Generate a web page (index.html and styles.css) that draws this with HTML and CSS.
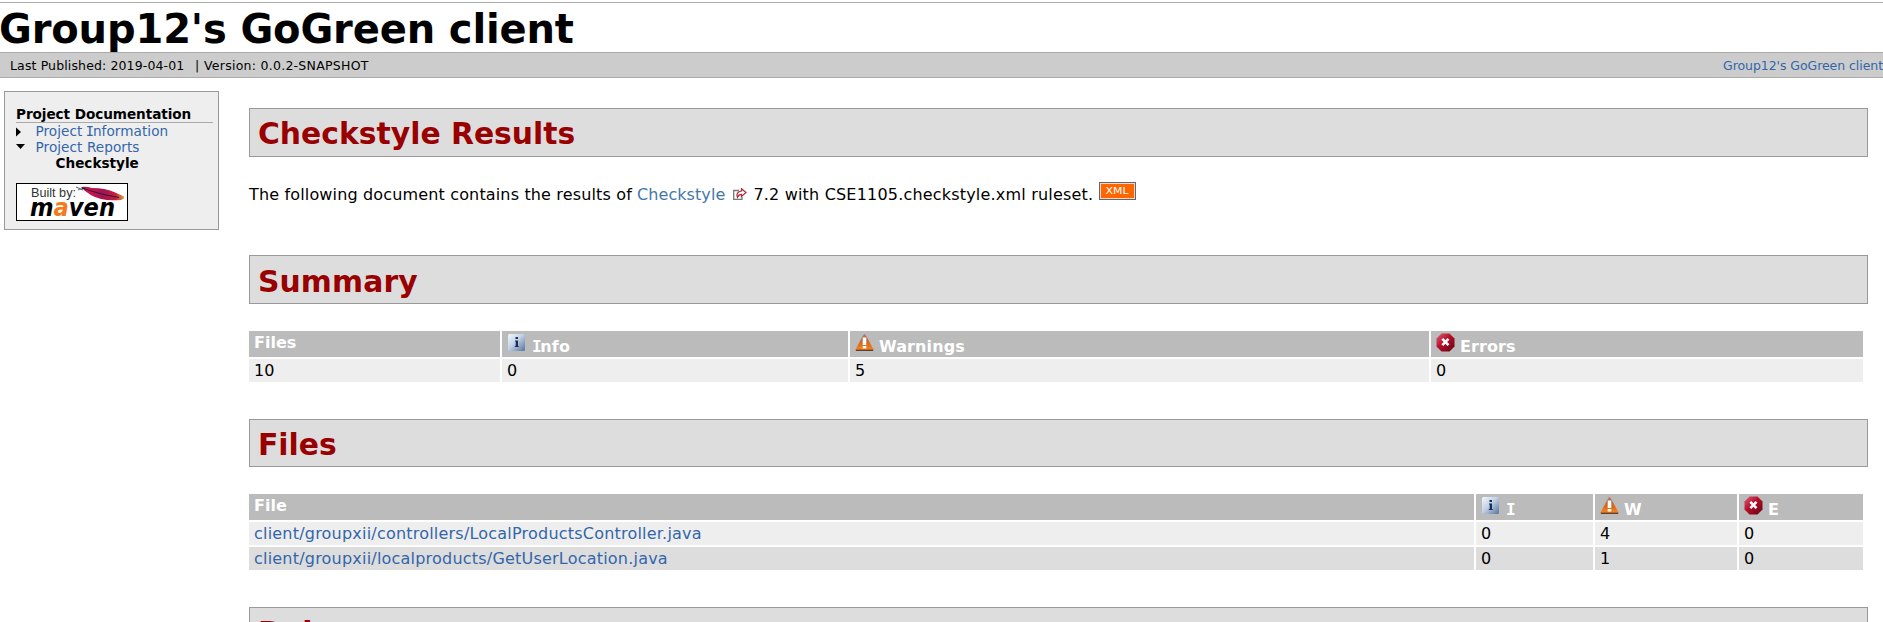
FILE: index.html
```html
<!DOCTYPE html>
<html lang="en">
<head>
<meta charset="utf-8">
<title>Group12's GoGreen client – Checkstyle Results</title>
<link rel="stylesheet" href="styles.css">
</head>
<body>
<svg class="defs" width="0" height="0">
  <defs>
    <linearGradient id="blue" x1="0" y1="0" x2="1" y2="1"><stop offset="0" stop-color="#f4f8fc"/><stop offset=".45" stop-color="#c3d2e4"/><stop offset="1" stop-color="#56749f"/></linearGradient>
    <linearGradient id="orange" x1="0" y1="0" x2="0" y2="1"><stop offset="0" stop-color="#a88078"/><stop offset=".3" stop-color="#b8683c"/><stop offset=".6" stop-color="#dc6c18"/><stop offset=".85" stop-color="#f08020"/><stop offset="1" stop-color="#7a4420"/></linearGradient>
    <linearGradient id="red" x1="0" y1="0" x2="1" y2="1"><stop offset="0" stop-color="#d8607c"/><stop offset=".45" stop-color="#b80d28"/><stop offset="1" stop-color="#5c0614"/></linearGradient>
    <linearGradient id="feather" x1="0" y1="0" x2="1" y2="0"><stop offset="0" stop-color="#5a1a58"/><stop offset=".15" stop-color="#d01848"/><stop offset=".5" stop-color="#a01450"/><stop offset=".8" stop-color="#c81c38"/><stop offset="1" stop-color="#d8a040"/></linearGradient>
    <symbol id="info" viewBox="0 0 19 19"><rect x="1" y="1" width="17" height="17" rx="1.5" fill="url(#blue)"/><path d="M8.500 4h2.500v2H8.500zM8 7.500H11V13h.7v1H7.800v-1h.9V8.500H8z" fill="#15305c"/></symbol>
    <symbol id="warn" viewBox="0 0 19 19"><path d="M9.500 1Q10.500 1 11.500 3.500L18.500 16.500Q18.500 18 17 18H2Q.500 18 .500 16.500L7.500 3.500Q8.500 1 9.500 1z" fill="url(#orange)"/><path d="M1 17.500h17" stroke="#5b4034"/><path d="M7.700 4.500h3.600V12H7.700zM7.700 13h3.600v2.500H7.700z" fill="#fff"/></symbol>
    <symbol id="error" viewBox="0 0 19 19"><path d="M5.500.500h8l5 5v8l-5 5h-8l-5-5v-8z" fill="url(#red)"/><path d="M6.300 5.800l6.200 6.400M12.500 5.800l-6.200 6.400" stroke="#fff" stroke-width="2.600"/></symbol>
  </defs>
</svg>
<header>
  <div class="banner">Group12's GoGreen client</div>
  <div class="breadcrumbs">
    <div class="published"><span class="date">Last Published: 2019-04-01</span><span class="bar">|</span><span class="version">Version: 0.0.2-SNAPSHOT</span></div>
    <a class="project">Group12's GoGreen client</a>
  </div>
</header>
<div class="page">
  <nav class="sidebar">
    <h5>Project Documentation</h5>
    <ul>
      <li><svg class="arrow" viewBox="0 0 10 16"><path d="M0 4.500l5 4.500-5 4.500z"/></svg><a class="information">Project <span class="serifed">I</span>nformation</a></li>
      <li><svg class="arrow" viewBox="0 0 10 16"><path d="M0 5h9L4.500 10z"/></svg><a class="reports">Project Reports</a></li>
      <li class="current"><strong>Checkstyle</strong></li>
    </ul>
    <svg class="maven" viewBox="0 0 112 38">
      <rect x=".5" y=".5" width="111" height="37" fill="#fff" stroke="#000"/>
      <text x="15" y="13.500" font-size="12" textLength="45" lengthAdjust="spacingAndGlyphs" class="built">Built by:</text>
      <path d="M60 4l7 3M62 7l6-2" stroke="#667078" stroke-width="1.200"/>
      <path d="M65 4q5-1 11 1 13 0 22 4l9 4q3 2-2 4-12 1-20-1-12-3-20-12z" fill="url(#feather)"/>
      <path d="M66 5q15 5 24 7l13 2.500" fill="none" stroke="#321040"/>
      <text x="14" y="32.500" font-size="24" textLength="85" lengthAdjust="spacingAndGlyphs" class="brand">m<tspan class="flame">a</tspan>ven</text>
    </svg>
  </nav>
  <main>
    <h2 class="results">Checkstyle Results</h2>
    <p><span class="intro">The following document contains the results of</span> <a class="tool">Checkstyle</a><svg class="external" viewBox="0 0 14 12"><path d="M6 2.500H.7v8.800H9V9" fill="none" stroke="#777" stroke-width="1.300"/><path d="M8.500.8L13 4.500 8.500 8.500V6.300Q5.500 6.300 4.500 9.300 2.500 4 8.500 3z" fill="#fff" stroke="#a92b38" stroke-width="1.200"/></svg><span class="ruleset">7.2 with CSE1105.checkstyle.xml ruleset.</span><svg class="xml" viewBox="0 0 37 18"><rect x=".5" y=".5" width="36" height="17" fill="#e8d8c8" stroke="#666"/><rect x="2" y="2" width="33" height="14" fill="#f60"/><text x="6.500" y="12" textLength="23" lengthAdjust="spacingAndGlyphs">XML</text></svg></p>
    <h2 class="summary">Summary</h2>
    <table>
      <colgroup><col style="width:253px"><col style="width:348px"><col style="width:581px"><col style="width:432px"></colgroup>
      <tr><th>Files</th><th class="severity"><svg><use href="#info"/></svg> <span class="serifed">I</span>nfo</th><th class="severity"><svg><use href="#warn"/></svg>Warnings</th><th class="severity"><svg><use href="#error"/></svg>Errors</th></tr>
      <tr class="light"><td>10</td><td>0</td><td>5</td><td>0</td></tr>
    </table>
    <h2 class="files">Files</h2>
    <table>
      <colgroup><col style="width:1227px"><col style="width:119px"><col style="width:144px"><col style="width:124px"></colgroup>
      <tr><th>File</th><th class="severity"><svg><use href="#info"/></svg> <span class="serifed">I</span></th><th class="severity"><svg><use href="#warn"/></svg>W</th><th class="severity"><svg><use href="#error"/></svg>E</th></tr>
      <tr class="light"><td><a class="path">client/groupxii/controllers/LocalProductsController.java</a></td><td>0</td><td>4</td><td>0</td></tr>
      <tr class="dark"><td><a class="path">client/groupxii/localproducts/GetUserLocation.java</a></td><td>0</td><td>1</td><td>0</td></tr>
    </table>
    <h2 class="rules">Rules</h2>
  </main>
</div>
</body>
</html>
```
FILE: styles.css
```css
* { box-sizing: border-box; }
html, body { height: 622px; overflow: hidden; }
body { margin: 0; background: #fff; color: #000; font: 16px/20px Verdana, "DejaVu Sans", sans-serif; }
a { color: #36a; text-decoration: none; }
.defs { display: block; }
header { padding-top: 2px; }
.banner { height: 50px; border-top: 1px solid #aaa; font-size: 40px; line-height: 52px; font-weight: bold; letter-spacing: -.14px; text-indent: -1px; white-space: nowrap; }
.breadcrumbs { display: flex; justify-content: space-between; height: 26px; padding-left: 10px; background: #ccc; border: solid #aaa; border-width: 1px 0; font-size: 12.5px; line-height: 25px; white-space: nowrap; }
.published { display: flex; }
.date { width: 185px; letter-spacing: .13px; }
.bar { width: 9px; }
.version { letter-spacing: .26px; }
.project { letter-spacing: -.06px; }
.page { display: flex; align-items: flex-start; }
.sidebar { width: 215px; height: 139px; margin: 13px 30px 0 4px; padding: 14px 5px 0 11px; background: #eee; border: 1px solid #999; font-size: 13.6px; line-height: 16px; white-space: nowrap; }
.sidebar h5 { margin: 0; height: 17px; font-size: 13.6px; letter-spacing: -.06px; border-bottom: 1px solid #aaa; }
.sidebar ul { margin: 0 0 12px; padding: 0; list-style: none; }
.sidebar li { display: flex; height: 16px; }
.arrow { width: 10px; height: 16px; margin-right: 9.5px; }
.information { letter-spacing: .06px; }
.reports { letter-spacing: .07px; }
.sidebar .current { padding-left: 39.5px; }
.serifed { font-family: "DejaVu Sans Mono", monospace; line-height: 1; margin: 0 -.08em; }
.maven { display: block; width: 112px; height: 38px; }
.built { font-family: "Liberation Sans", Arial, sans-serif; fill: #333; }
.brand { font-family: "DejaVu Sans", sans-serif; font-weight: bold; font-style: italic; }
.flame { fill: #f47a1c; }
main { width: 1619px; padding-top: 30px; }
h2 { height: 49px; margin: 0; padding-left: 8px; background: #ddd; border: 1px solid #999; color: #900; font-size: 29.8px; line-height: 49px; }
.summary { line-height: 51px; letter-spacing: .1px; }
.files, .rules { height: 48px; }
p { display: flex; align-items: flex-start; height: 98px; margin: 0; padding-top: 26px; line-height: 23px; white-space: nowrap; }
.intro { letter-spacing: .153px; }
.tool { color: #47a; margin-left: 5px; letter-spacing: .08px; }
.external { width: 14px; height: 12px; margin: 5px 6px 0 8px; }
.ruleset { letter-spacing: .19px; }
.xml { width: 37px; height: 18px; margin: -1px 0 0 6px; }
.xml text { font: 8px "DejaVu Sans", sans-serif; fill: #fff; }
table { width: 1614px; margin: 27px 0 37px; border-collapse: separate; border-spacing: 0; table-layout: fixed; }
th, td { padding: 0 5px; text-align: left; vertical-align: top; border-right: 2px solid #fff; }
th:last-child, td:last-child { border-right: 0; }
th { height: 26px; background: #bbb; color: #fff; line-height: 24px; }
.severity { padding-top: 5px; line-height: 21px; letter-spacing: .1px; }
.severity svg { width: 19px; height: 19px; margin: -3px 5px 0 0; vertical-align: top; }
.severity .serifed { margin-left: -.3em; }
td { height: 25px; padding-top: 1px; border-top: 2px solid #fff; line-height: 22px; }
tr.light td { background: #eee; }
tr.dark td { background: #ddd; }
.path { display: block; letter-spacing: .21px; }
```
